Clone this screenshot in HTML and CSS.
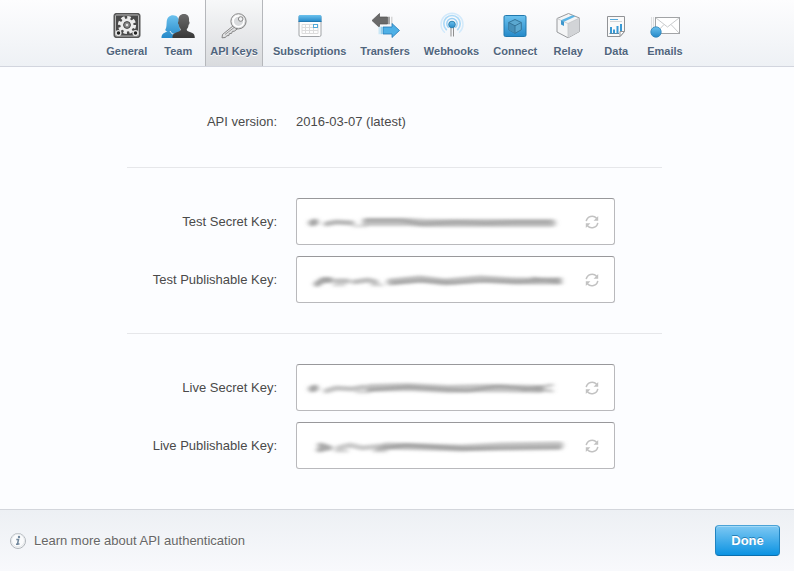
FILE: index.html
```html
<!DOCTYPE html>
<html lang="en">
<head>
    <meta charset="UTF-8">
    <meta name="viewport" content="width=device-width, initial-scale=1.0">
    <title>Account Settings - API Keys</title>
    <link rel="stylesheet" href="styles.css">
</head>
<body>
    <!-- Shared gradients and symbols -->
    <svg class="defs" width="0" height="0" aria-hidden="true">
        <defs>
            <linearGradient id="blue" x1="0" y1="0" x2="0" y2="1">
                <stop offset="0" stop-color="#6cc2ee"/>
                <stop offset="1" stop-color="#2589c9"/>
            </linearGradient>
            <linearGradient id="dark" x1="0" y1="0" x2="0" y2="1">
                <stop offset="0" stop-color="#6b6b6b"/>
                <stop offset="1" stop-color="#383838"/>
            </linearGradient>
            <linearGradient id="silver" x1="0" y1="0" x2="1" y2="1">
                <stop offset="0" stop-color="#ffffff"/>
                <stop offset="1" stop-color="#c4c6c9"/>
            </linearGradient>
            <filter id="smear" x="-5%" y="-80%" width="110%" height="260%">
                <feGaussianBlur stdDeviation="2.4 1.6"/>
            </filter>
        </defs>
        <symbol id="refresh" viewBox="0 0 14 14">
            <path d="M1.200 6.200A6 6 0 0 1 11.600 3.300M12.800 7.800A6 6 0 0 1 2.400 10.700" fill="none" stroke="#c2c2c2" stroke-width="1.500"/>
            <path d="M13.200 1v4.700H8.600zM.8 13V8.300h4.600z" fill="#c2c2c2"/>
        </symbol>
    </svg>

    <!-- Tabs -->
    <nav class="tabs">
        <a class="tab" href="#general">
            <svg class="icon" width="36" height="28" viewBox="0 0 36 28" aria-hidden="true">
                <rect x="5" y="1.500" width="26" height="24" rx="2" fill="#5c5c5c" stroke="#555"/>
                <rect x="6.500" y="3" width="23" height="21" rx="1" fill="#4a4a4a" stroke="#b5b5b5"/>
                <circle cx="18" cy="13" r="6.600" fill="#ececec"/>
                <circle cx="18" cy="13" r="7.400" fill="none" stroke="#ececec" stroke-width="3.400" stroke-dasharray="3.400 2.410"/>
                <circle cx="18" cy="13" r="3.400" fill="#8a8a8a" stroke="#444"/>
                <circle cx="18" cy="13" r="1.200" fill="#e4e4e4"/>
                <circle cx="9.500" cy="21" r="2.400" fill="#222" stroke="#e4e4e4" stroke-width="1.400"/>
                <circle cx="26.500" cy="21" r="2.400" fill="#222" stroke="#e4e4e4" stroke-width="1.400"/>
            </svg>
            General
        </a>
        <a class="tab" href="#team">
            <svg class="icon" width="36" height="28" viewBox="0 0 36 28" aria-hidden="true">
                <path d="M1.500 26c0-3.700 1.600-4.800 6-6.500-1.300-.4-2-.9-2.300-1.500 1.600-2.300 1.200-5.500 1.500-8.500C7 5.500 9.500 3.200 13 3.200c4 0 6 2.800 6 6.800 0 3 .3 5 1.200 7.500l-1 8.500z" fill="url(#blue)"/>
                <path d="M10 19c1 2.500 3 3.500 5 3" fill="none" stroke="#e5f3fb"/>
                <path d="M12.500 26c0-4 1.600-4.900 5.700-6.200 2-.7 2.600-1.500 2.400-2.800-1.300-1-1.600-2.700-1.800-4.400-1-.3-1.200-3-.3-3.400C18 4 20.500 2 24 2s5.600 2.200 5 7.200c1 .5.600 3.200-.4 3.500-.2 1.800-.6 3.300-1.800 4.300-.2 1.500.5 2.200 2.400 2.800 4 1.300 5.600 2.200 5.600 6.200z" fill="url(#dark)"/>
            </svg>
            Team
        </a>
        <a class="tab active" href="#apikeys" aria-current="page">
            <svg class="icon" width="36" height="28" viewBox="0 0 36 28" aria-hidden="true">
                <path d="M17.800 13.300 6.500 22.500 6 25.800l3.400-.3 1.300-1.700 2.200-.3.500-1.900 2.200-.2.800-2 1.900-.2 4-3z" fill="url(#silver)" stroke="#858585" stroke-linejoin="round"/>
                <path d="m9 22.500 9.500-7.300" stroke="#999"/>
                <circle cx="22.500" cy="9.300" r="7.600" fill="url(#silver)" stroke="#858585"/>
                <circle cx="22.500" cy="9.300" r="5.400" fill="#d9dbdd" stroke="#fff" stroke-width="1.500"/>
                <circle cx="24.700" cy="7" r="2.300" fill="#f3f4f6" stroke="#858585"/>
            </svg>
            API Keys
        </a>
        <a class="tab" href="#subscriptions">
            <svg class="icon" width="36" height="28" viewBox="0 0 36 28" aria-hidden="true">
                <rect x="7" y="3.500" width="22" height="21" rx="1.500" fill="#fdfdfd" stroke="#a0a3a6"/>
                <path d="M6.500 9.500V4.500Q6.500 3 8 3h20q1.500 0 1.500 1.500v5z" fill="url(#blue)"/>
                <path d="M6.500 9.500h23" stroke="#2479b0"/>
                <path d="M10 12.500h16v9H10zM10 15.500h16M10 18.500h16M13.500 12v10M17.500 12v10M21.500 12v10" fill="none" stroke="#dcdcdc"/>
                <rect x="21.500" y="12.500" width="4" height="3" fill="#fff" stroke="#53a9d8"/>
            </svg>
            Subscriptions
        </a>
        <a class="tab" href="#transfers">
            <svg class="icon" width="36" height="28" viewBox="0 0 36 28" aria-hidden="true">
                <path d="M5 8.500 12.500 1.500V5h8v7h-8v3.500z" fill="#6a6a6a" stroke="#555" stroke-width=".7"/>
                <path d="M21 4.700h2v7.500h-2z" fill="#a7a7a7"/>
                <path d="M24 4.700h1.500v7.500H24z" fill="#d6d6d6"/>
                <path d="M32.500 18.500 25 11.500V15h-9v7h9v3.500z" fill="#4eb0e6" stroke="#2379b6" stroke-width=".8"/>
                <path d="M13.500 14.700h2v7.500h-2z" fill="#94d0ee"/>
                <path d="M11.500 14.700H13v7.500h-1.500z" fill="#c9e7f6"/>
            </svg>
            Transfers
        </a>
        <a class="tab" href="#webhooks">
            <svg class="icon" width="36" height="28" viewBox="0 0 36 28" aria-hidden="true">
                <g fill="none" stroke-linecap="round">
                    <path d="M10.500 20.200a11 11 0 1 1 15 0" stroke="#d3eafb" stroke-width="1.500"/>
                    <path d="M12.300 17.600a8.200 8.200 0 1 1 11.400 0" stroke="#addaf7" stroke-width="1.700"/>
                    <path d="M14.300 15.300a5.200 5.200 0 1 1 7.400 0" stroke="#9bd0f4" stroke-width="1.500"/>
                </g>
                <path d="M17 14v10.500M19.500 14v10.500" stroke="#8f8f8f"/>
                <circle cx="18" cy="12.500" r="3.300" fill="url(#blue)" stroke="#3083b0"/>
            </svg>
            Webhooks
        </a>
        <a class="tab" href="#connect">
            <svg class="icon" width="36" height="28" viewBox="0 0 36 28" aria-hidden="true">
                <rect x="7" y="3.500" width="22" height="21" rx="1.500" fill="url(#blue)" stroke="#2179ae"/>
                <path d="m18 7.500 6.300 3v7.300L18 21.300l-6.300-3.500v-7.300z" fill="#5ba8d0" stroke="#35759a"/>
                <path d="m11.700 10.500 6.300 3.300v7.500l-6.300-3.500z" fill="#468fb8"/>
                <path d="m11.700 10.500 6.300 3.300 6.300-3.300M18 13.800v7.500" fill="none" stroke="#35759a"/>
            </svg>
            Connect
        </a>
        <a class="tab" href="#relay">
            <svg class="icon" width="36" height="28" viewBox="0 0 36 28" aria-hidden="true">
                <path d="m18.500 1.500 11 4.500v13.500L18 25.800 7 20V6.500z" fill="#f4f5f6" stroke="#97999c" stroke-linejoin="round"/>
                <path d="M18 11.500 29.500 6v13.500L18 25.800z" fill="#d2d4d7"/>
                <path d="M7 6.500 18 11.500 29.500 6M18 11.500v14" fill="none" stroke="#c3c5c8" stroke-width=".8"/>
                <path d="m11 8.300 11.500-5 2.800 1.200-11.300 5.200z" fill="#5db5e5"/>
                <path d="m11 8.300 3 1.400v4.200l-3-1.500z" fill="#3d97cd"/>
            </svg>
            Relay
        </a>
        <a class="tab" href="#data">
            <svg class="icon" width="36" height="28" viewBox="0 0 36 28" aria-hidden="true">
                <path d="M9.500 4.500h17v15l-4.500 5H9.500z" fill="#fafafa" stroke="#919396" stroke-linejoin="round"/>
                <path d="M26.500 19.500h-4.500v5z" fill="#fff" stroke="#919396"/>
                <path d="M12 7.500h8" stroke="#55a9db"/>
                <path d="M12 9.500h12" stroke="#d4d5d6"/>
                <path d="M13 21.500V15M16 21.500V17.500M19.500 21.500V14M23 19V12" stroke="#3a9ad5" stroke-width="2"/>
                <path d="M11.500 21.500H21" stroke="#5a8cab"/>
            </svg>
            Data
        </a>
        <a class="tab" href="#emails">
            <svg class="icon" width="36" height="28" viewBox="0 0 36 28" aria-hidden="true">
                <path d="M4.500 5v12M6.500 5v12" stroke="#dedfe0"/>
                <rect x="8.500" y="5.500" width="24" height="16" fill="#fff" stroke="#a2a4a6"/>
                <path d="m9 6 11.500 9L32 6M9 21l8-8.500M32 21l-8-8.500" fill="none" stroke="#c9cbcd"/>
                <circle cx="9" cy="20" r="5.200" fill="url(#blue)" stroke="#2c82b8" stroke-width=".8"/>
            </svg>
            Emails
        </a>
    </nav>

    <!-- API keys -->
    <main class="content">
        <section class="group version">
            <div class="row">
                <span class="label">API version:</span>
                <span>2016-03-07 (latest)</span>
            </div>
        </section>

        <section class="group">
            <div class="row">
                <label class="label" for="test-secret">Test Secret Key:</label>
                <div class="field">
                    <input id="test-secret" type="text" readonly>
                    <svg class="smudge" width="272" height="24" viewBox="0 0 272 24" aria-hidden="true">
                        <g filter="url(#smear)" fill="none" stroke="#858585" stroke-linecap="round">
                            <path d="M14 13l3-1" stroke-width="7" opacity=".75"/>
                            <path d="M28 14l10-2 16 1" stroke-width="5" opacity=".6"/>
                            <path d="M56 16h12" stroke-width="3" opacity=".3"/>
                            <path d="M68 12h42l18 1h126" stroke-width="8" opacity=".5"/>
                            <path d="M68 10h35l20 4 35-2 30 1 30-1h34" stroke-width="4" opacity=".4"/>
                        </g>
                    </svg>
                    <button class="roll" type="button" aria-label="Roll test secret key"><svg width="14" height="14"><use href="#refresh"/></svg></button>
                </div>
            </div>
            <div class="row">
                <label class="label" for="test-publishable">Test Publishable Key:</label>
                <div class="field">
                    <input id="test-publishable" type="text" readonly>
                    <svg class="smudge" width="272" height="24" viewBox="0 0 272 24" aria-hidden="true">
                        <g filter="url(#smear)" fill="none" stroke="#858585" stroke-linecap="round">
                            <path d="M19 16l6-4 7 0" stroke-width="6" opacity=".75"/>
                            <path d="M38 13h12M56 14l14-2 8 2" stroke-width="5" opacity=".55"/>
                            <path d="M36 17h10M74 17h10" stroke-width="3" opacity=".35"/>
                            <path d="M92 14l30-3 25 3 35-3 35 2 43 0" stroke-width="7" opacity=".55"/>
                            <path d="M95 15l30-2 30 2 35-2 30 1 43-3M235 10l28 5" stroke-width="3" opacity=".45"/>
                        </g>
                    </svg>
                    <button class="roll" type="button" aria-label="Roll test publishable key"><svg width="14" height="14"><use href="#refresh"/></svg></button>
                </div>
            </div>
        </section>

        <section class="group">
            <div class="row">
                <label class="label" for="live-secret">Live Secret Key:</label>
                <div class="field">
                    <input id="live-secret" type="text" readonly>
                    <svg class="smudge" width="272" height="24" viewBox="0 0 272 24" aria-hidden="true">
                        <g filter="url(#smear)" fill="none" stroke="#858585" stroke-linecap="round">
                            <path d="M14 13l3-1" stroke-width="7" opacity=".75"/>
                            <path d="M28 15l10-3 16 1 12-2" stroke-width="5" opacity=".5"/>
                            <path d="M59 16h12" stroke-width="3" opacity=".35"/>
                            <path d="M72 12l38-1 40 2 40-1 52 1" stroke-width="8" opacity=".5"/>
                            <path d="M70 14l40-3 60 4 30-5 54 5M225 14l29-5" stroke-width="3" opacity=".5"/>
                        </g>
                    </svg>
                    <button class="roll" type="button" aria-label="Roll live secret key"><svg width="14" height="14"><use href="#refresh"/></svg></button>
                </div>
            </div>
            <div class="row">
                <label class="label" for="live-publishable">Live Publishable Key:</label>
                <div class="field">
                    <input id="live-publishable" type="text" readonly>
                    <svg class="smudge" width="272" height="24" viewBox="0 0 272 24" aria-hidden="true">
                        <g filter="url(#smear)" fill="none" stroke="#858585" stroke-linecap="round">
                            <path d="M21 16l8-2M22 11l10 3" stroke-width="5" opacity=".7"/>
                            <path d="M40 14l12-3 12 3 20-2" stroke-width="5" opacity=".45"/>
                            <path d="M38 17h11M76 17h12" stroke-width="3" opacity=".35"/>
                            <path d="M88 12l40 1 35 1 40-2 59-1" stroke-width="7" opacity=".5"/>
                            <path d="M80 15l28-4 60 4 94-1" stroke-width="4" opacity=".5"/>
                        </g>
                    </svg>
                    <button class="roll" type="button" aria-label="Roll live publishable key"><svg width="14" height="14"><use href="#refresh"/></svg></button>
                </div>
            </div>
        </section>
    </main>

    <!-- Footer -->
    <footer class="footer">
        <a class="learn" href="#docs">
            <svg width="18" height="18" viewBox="0 0 18 18" aria-hidden="true">
                <circle cx="9" cy="9" r="7.500" fill="#fafbfc" stroke="#b0b5ba"/>
                <circle cx="9" cy="8.500" r="6.500" fill="none" stroke="#e3e6e9"/>
                <circle cx="10" cy="5" r="1.200" fill="#71879c"/>
                <path d="M7.300 7.500h2.200l-1 4.500h2M7 12.200h2" fill="none" stroke="#71879c" stroke-width="1.500"/>
            </svg>
            Learn more about API authentication
        </a>
        <button class="done" type="button">Done</button>
    </footer>
</body>
</html>
```
FILE: styles.css
```css
/* Base */
* {
    margin: 0;
    padding: 0;
    box-sizing: border-box;
}

body {
    display: flex;
    flex-direction: column;
    min-height: 100vh;
    background-color: #fcfdff;
    color: #4a4a4a;
    font-family: "Helvetica Neue", "Liberation Sans", Arial, sans-serif;
    font-size: 13px;
    line-height: 20px;
}

a {
    color: inherit;
    text-decoration: none;
}

.defs {
    position: absolute;
}

/* Tabs */
.tabs {
    display: flex;
    justify-content: center;
    gap: 6px;
    height: 67px;
    padding-right: 5px;
    border-bottom: 1px solid #d2d5de;
    background: linear-gradient(#fdfdfe, #eef1f5);
}

.tab {
    display: flex;
    flex-direction: column;
    align-items: center;
    min-width: 42px;
    padding: 12px 4px 0;
    color: #50657d;
    font-size: 11px;
    font-weight: bold;
    line-height: 22px;
    text-shadow: 0 1px 0 #fff;
}

.tab.active {
    border: solid #b5b7bb;
    border-width: 0 1px;
    background: linear-gradient(#f7f8f9, #d9dbde);
}

.icon {
    flex: none;
    margin: 0 -2px;
}

/* Content */
.content {
    flex: 1;
    width: 100%;
    max-width: 540px;
    margin: 0 auto;
    padding-right: 5px;
}

.group {
    display: flex;
    flex-direction: column;
    gap: 11px;
    padding: 30px 0;
    border-bottom: 1px solid #e6e7ea;
}

.group:last-child {
    border-bottom: 0;
}

.version {
    padding: 45px 0 35px;
}

.row {
    display: grid;
    grid-template-columns: 150px minmax(0, 319px);
    column-gap: 19px;
    align-items: center;
}

.label {
    text-align: right;
}

.field {
    position: relative;
    display: flex;
    align-items: center;
    height: 47px;
    padding-right: 12px;
    border: 1px solid #b9b9bc;
    border-top-color: #98989b;
    border-radius: 3px;
    background-color: #fff;
}

.field input {
    flex: 1;
    min-width: 0;
    height: 100%;
    padding: 0 12px;
    border: 0;
    outline: 0;
    background: none;
    font: inherit;
}

/* Hides the key */
.smudge {
    position: absolute;
    top: 11px;
    left: 1px;
    pointer-events: none;
}

.roll {
    display: flex;
    align-items: center;
    justify-content: center;
    width: 20px;
    height: 20px;
    border: 0;
    background: none;
    cursor: pointer;
}

/* Footer */
.footer {
    display: flex;
    align-items: center;
    justify-content: space-between;
    height: 62px;
    padding: 0 14px 0 9px;
    border-top: 1px solid #d3d6dc;
    background: linear-gradient(#edf0f4, #f8f9fc);
}

.learn {
    display: flex;
    align-items: center;
    gap: 7px;
    color: #666;
    text-shadow: 0 1px 0 #fff;
}

.done {
    width: 65px;
    height: 31px;
    border: 1px solid #2084c1;
    border-top-color: #4ba3d7;
    border-bottom-color: #0a6fae;
    border-radius: 4px;
    background: linear-gradient(#7dc8f3, #0c93e2);
    box-shadow: inset 0 1px 0 #a2d9f7;
    color: #fff;
    font: bold 13px/20px "Helvetica Neue", "Liberation Sans", Arial, sans-serif;
    text-shadow: 0 -1px 0 #2580b8;
    cursor: pointer;
}
```
